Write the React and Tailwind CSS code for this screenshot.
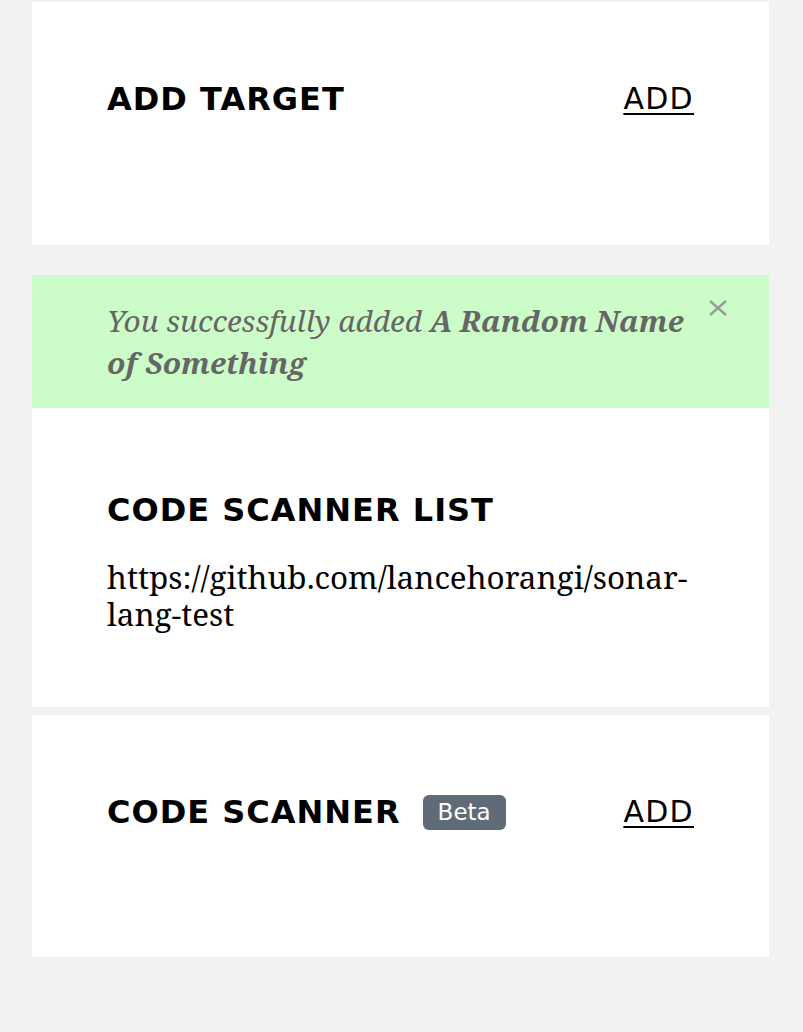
const headFont = { fontFamily: "'DejaVu Sans', 'Liberation Sans', sans-serif" };
const serifFont = { fontFamily: "'Noto Serif', 'DejaVu Serif', serif" };

function Heading({ children }) {
  return (
    <h2
      style={headFont}
      className="text-[32px] font-bold leading-[40px] tracking-[1px] text-black uppercase whitespace-nowrap"
    >
      {children}
    </h2>
  );
}

function AddLink() {
  return (
    <a
      href="#"
      style={headFont}
      className="text-[30px] leading-[40px] tracking-[1.3px] text-black underline decoration-2 underline-offset-[4px]"
    >
      ADD
    </a>
  );
}

export default function App() {
  return (
    <div className="min-h-[1032px] bg-[#f2f2f2] pt-[2px] px-8">
      <div className="w-[737px] flex flex-col">
        <section className="bg-white h-[243px] px-[75px] pt-[77px]">
          <div className="flex items-center justify-between">
            <Heading>Add Target</Heading>
            <AddLink />
          </div>
        </section>

        <div className="mt-[30px] bg-white flex flex-col">
          <div className="relative bg-[#ccfcc8] h-[133px] px-[75px] pt-[25px]">
            <p style={serifFont} className="italic text-[29.8px] leading-[42px] text-[#666666]">
              You successfully added <b className="font-bold">A Random Name</b> <b className="font-bold">of Something</b>
            </p>
            <button className="absolute top-[25px] right-[42px] w-[18px] h-[16px]" aria-label="close">
              <svg width="18" height="16" viewBox="0 0 18 16" className="block">
                <line x1="1" y1="1" x2="17" y2="15" stroke="#9a9a9a" strokeWidth="2.4" />
                <line x1="17" y1="1" x2="1" y2="15" stroke="#9a9a9a" strokeWidth="2.4" />
              </svg>
            </button>
          </div>
          <section className="h-[299px] px-[75px] pt-[82px] flex flex-col gap-[28px]">
            <Heading>Code Scanner List</Heading>
            <p style={serifFont} className="text-[31.4px] leading-[37.4px] text-black">
              https://github.com/lancehorangi/sonar-lang-test
            </p>
          </section>
        </div>

        <section className="mt-2 bg-white h-[242px] px-[75px] pt-[77px]">
          <div className="flex items-center justify-between">
            <div className="flex items-center gap-[22px]">
              <Heading>Code Scanner</Heading>
              <span
                style={headFont}
                className="inline-flex items-center h-[35px] px-[15px] rounded-[6px] bg-[#5f6b78] text-white text-[23px] leading-none"
              >
                Beta
              </span>
            </div>
            <AddLink />
          </div>
        </section>
      </div>
    </div>
  );
}
